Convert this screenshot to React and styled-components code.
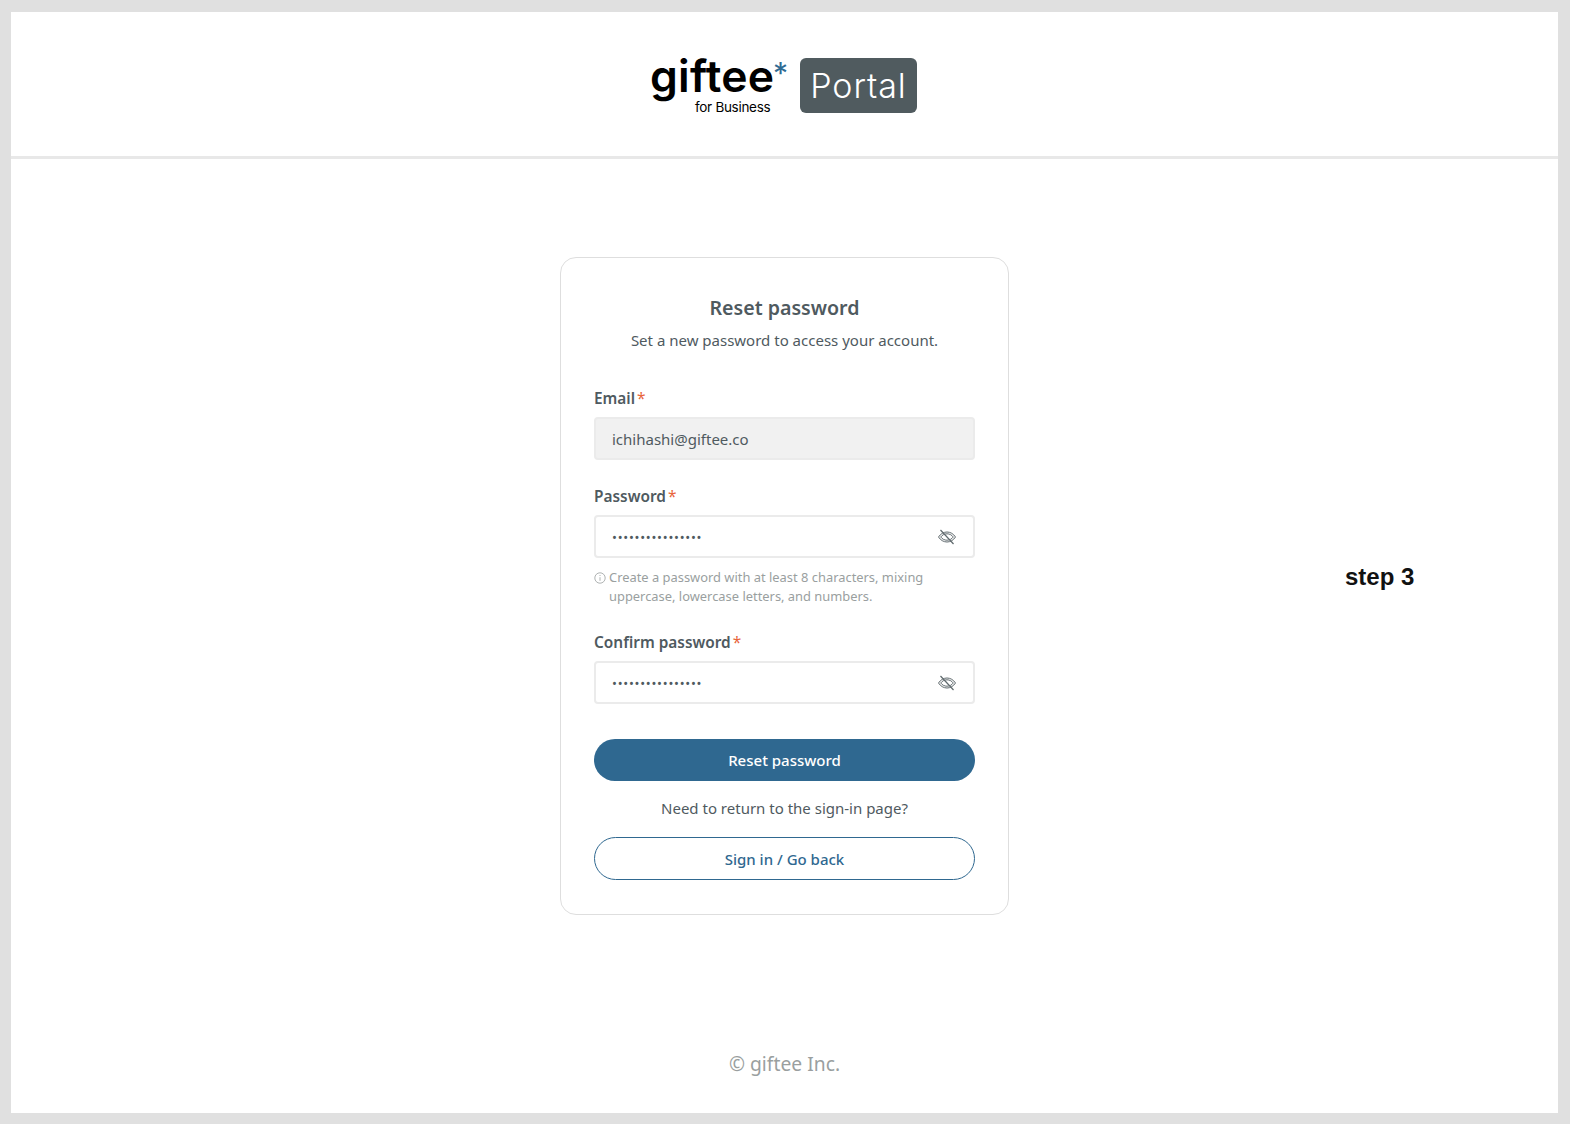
import React from 'react';
import styled, { createGlobalStyle } from 'styled-components';

const GlobalStyle = createGlobalStyle`
  html, body {
    margin: 0;
    padding: 0;
    background: #e0e0e0;
  }
  * {
    box-sizing: border-box;
  }
`;

const Frame = styled.div`
  width: 1570px;
  height: 1124px;
  padding: 12px 12px 11px 11px;
  font-family: 'Noto Sans', sans-serif;
  color: #4f5a5f;
`;

const Page = styled.div`
  height: 100%;
  display: flex;
  flex-direction: column;
  background: #fff;
`;

const Header = styled.header`
  height: 147px;
  flex-shrink: 0;
  display: flex;
  align-items: center;
  justify-content: center;
  gap: 13px;
  padding-right: 2px;
  border-bottom: 3px solid #e8e8e8;
`;

const Logo = styled.div`
  display: flex;
  flex-direction: column;
  align-items: flex-start;
  width: 137px;
  font-family: Inter, sans-serif;
  color: #000;
`;

const Wordmark = styled.div`
  font-size: 44.5px;
  line-height: 44px;
  font-weight: 600;
  letter-spacing: 0.2px;
  position: relative;
  white-space: nowrap;
`;

const Star = styled.span`
  position: absolute;
  top: 4px;
  left: 123px;
  color: #2f6b93;
  font-size: 30px;
  line-height: 30px;
  font-weight: 400;
`;

const ForBusiness = styled.div`
  font-size: 13.5px;
  line-height: 16px;
  letter-spacing: -0.3px;
  margin: 1px 0 0 45px;
  white-space: nowrap;
`;

const PortalBadge = styled.div`
  width: 117px;
  height: 55px;
  margin-top: 3px;
  border-radius: 6px;
  background: #505b5f;
  color: #fff;
  font-family: Inter, sans-serif;
  font-size: 34px;
  font-weight: 300;
  letter-spacing: 0.9px;
  display: flex;
  align-items: center;
  justify-content: center;
`;

const Main = styled.main`
  flex: 1;
  display: grid;
  grid-template-columns: 1fr 449px 1fr;
  padding-top: 98px;
  align-items: start;
`;

const Card = styled.section`
  grid-column: 2;
  height: 658px;
  padding: 35px 33px 34px;
  border: 1px solid #dedede;
  border-radius: 16px;
  display: flex;
  flex-direction: column;
`;

const Title = styled.h1`
  margin: 0;
  font-size: 19.6px;
  line-height: 30px;
  font-weight: 600;
  text-align: center;
`;

const Lead = styled.p`
  margin: 5px 0 0;
  font-size: 15px;
  line-height: 24px;
  text-align: center;
`;

const Field = styled.div`
  margin-top: ${({ $top }) => $top}px;
`;

const Label = styled.label`
  display: block;
  font-size: 15.4px;
  line-height: 20px;
  font-weight: 600;
  margin-bottom: 8px;

  span {
    color: #e8643c;
    font-weight: 400;
    margin-left: 2px;
  }
`;

const InputBox = styled.div`
  height: 43px;
  padding: 0 16px 0 16px;
  border: 2px solid #ebebeb;
  border-radius: 4px;
  background: ${({ $disabled }) => ($disabled ? '#f1f1f1' : '#fff')};
  display: flex;
  align-items: center;
  justify-content: space-between;
  font-size: 15px;
`;

const Dots = styled.span`
  font-size: 13px;
  letter-spacing: 0.75px;
  color: #4f5a5f;
`;

const Hint = styled.p`
  position: relative;
  margin: 10px 40px 0 0;
  padding-left: 15px;
  font-size: 12.9px;
  line-height: 19px;
  color: #9a9f9f;
`;

const HintIcon = styled.svg`
  position: absolute;
  left: 0;
  top: 4px;
  width: 12px;
  height: 12px;
`;

const PrimaryButton = styled.button`
  display: block;
  width: 100%;
  height: 43px;
  margin-top: 35px;
  border: 0;
  border-radius: 22px;
  background: #2f6890;
  color: #fff;
  font-family: inherit;
  font-size: 15px;
  font-weight: 500;
`;

const ReturnText = styled.p`
  margin: 15px 0 0;
  font-size: 15px;
  line-height: 24px;
  text-align: center;
`;

const OutlineButton = styled.button`
  display: block;
  width: 100%;
  height: 43px;
  margin-top: 17px;
  border: 1px solid #2f6890;
  border-radius: 22px;
  background: #fff;
  color: #2f6890;
  font-family: inherit;
  font-size: 15px;
  font-weight: 500;
`;

const StepNote = styled.div`
  grid-column: 3;
  margin: 305px 0 0 336px;
  font-family: 'Liberation Sans', Arial, sans-serif;
  font-size: 24px;
  line-height: 30px;
  font-weight: 700;
  color: #111;
  white-space: nowrap;
`;

const Footer = styled.footer`
  height: 62px;
  flex-shrink: 0;
  text-align: center;
  font-size: 19.3px;
  line-height: 26px;
  color: #9a9f9f;
`;

const EyeOff = () => (
  <svg width="20" height="20" viewBox="0 0 20 20" fill="none" stroke="#5f696d" strokeWidth="1">
    <path d="M1.5 10C3.6 6.800 6.600 5 10 5s6.400 1.800 8.500 5c-2.100 3.200-5.100 5-8.500 5s-6.400-1.800-8.500-5z" />
    <path d="M3.700 10C5.300 7.900 7.500 6.800 10 6.800s4.700 1.100 6.300 3.200c-1.600 2.100-3.800 3.200-6.300 3.200s-4.700-1.100-6.300-3.200z" />
    <path d="M3.500 3l13 14" strokeWidth="1.200" />
  </svg>
);

const PASSWORD_DOTS = '••••••••••••••••';

const App = () => (
  <Frame>
    <GlobalStyle />
    <Page>
      <Header>
        <Logo>
          <Wordmark>
            giftee
            <Star>*</Star>
          </Wordmark>
          <ForBusiness>for Business</ForBusiness>
        </Logo>
        <PortalBadge>Portal</PortalBadge>
      </Header>

      <Main>
        <Card>
          <Title>Reset password</Title>
          <Lead>Set a new password to access your account.</Lead>

          <Field $top={37}>
            <Label>
              Email<span>*</span>
            </Label>
            <InputBox $disabled>ichihashi@giftee.co</InputBox>
          </Field>

          <Field $top={27}>
            <Label>
              Password<span>*</span>
            </Label>
            <InputBox>
              <Dots>{PASSWORD_DOTS}</Dots>
              <EyeOff />
            </InputBox>
            <Hint>
              <HintIcon viewBox="0 0 12 12" fill="none" stroke="#9a9f9f" strokeWidth="0.8">
                <circle cx="6" cy="6" r="5.200" />
                <path d="M6 5.200v3.600M6 3v1" />
              </HintIcon>
              Create a password with at least 8 characters, mixing uppercase, lowercase letters,
              and numbers.
            </Hint>
          </Field>

          <Field $top={27}>
            <Label>
              Confirm password<span>*</span>
            </Label>
            <InputBox>
              <Dots>{PASSWORD_DOTS}</Dots>
              <EyeOff />
            </InputBox>
          </Field>

          <PrimaryButton>Reset password</PrimaryButton>
          <ReturnText>Need to return to the sign-in page?</ReturnText>
          <OutlineButton>Sign in / Go back</OutlineButton>
        </Card>
        <StepNote>step 3</StepNote>
      </Main>

      <Footer>© giftee Inc.</Footer>
    </Page>
  </Frame>
);

export default App;
